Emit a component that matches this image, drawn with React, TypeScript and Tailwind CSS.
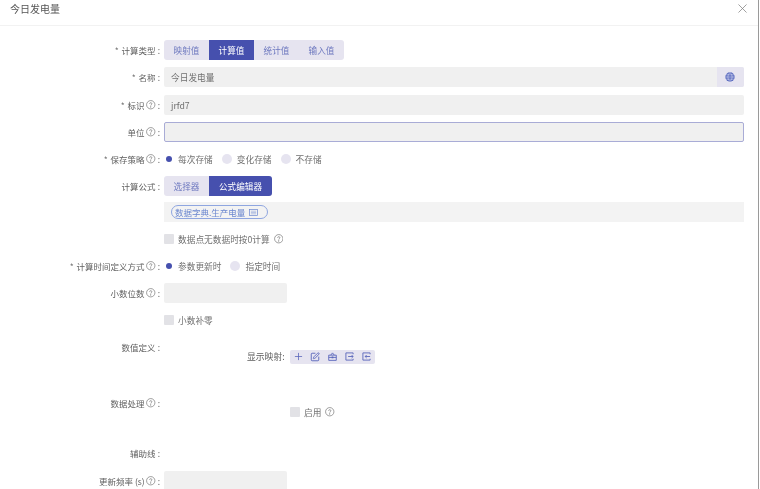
import React from "react";
import { Plus, SquarePen, X } from "lucide-react";

function Help({ className = "" }: { className?: string }) {
  return (
    <svg viewBox="0 0 10 10" className={"h-[9.5px] w-[9.5px] shrink-0 " + className} fill="none" stroke="#707070" strokeWidth="0.7">
      <circle cx="5" cy="5" r="4.4" />
      <path d="M3.800 4c0-.7.5-1.200 1.200-1.200S6.200 3.300 6.200 4C6.200 4.900 5 4.900 5 5.900" />
      <circle cx="5" cy="7.300" r=".3" fill="#707070" />
    </svg>
  );
}

function Row({ label, star, help, className = "", children }: { label: React.ReactNode; star?: boolean; help?: boolean; className?: string; children?: React.ReactNode }) {
  return (
    <div className={"flex h-5 items-center " + className}>
      <div className="flex w-[164px] shrink-0 items-center justify-end whitespace-nowrap pr-[4px] text-[8.5px] text-[#606060]">
        {star && <span className="mr-[3px] pt-[1px] text-[#777]">*</span>}
        <span className="pt-[1px]">{label}</span>
        {help && <Help className="ml-[1.5px]" />}
        <span className="ml-[2px] pt-[1px]">:</span>
      </div>
      {children}
    </div>
  );
}

function Seg({ items, active, widths }: { items: string[]; active: number; widths: string[] }) {
  return (
    <div className="flex h-5 overflow-hidden rounded-[3px] bg-[#e6e4f0]">
      {items.map((t, i) => (
        <div key={t} className={"flex items-center justify-center pt-[1px] text-[8.6px] " + widths[i] + " " + (i === active ? "bg-[#4650ae] text-white" : "text-[#6d78bf]")}>
          {t}
        </div>
      ))}
    </div>
  );
}

function Radio({ label, on, className = "" }: { label: string; on?: boolean; className?: string }) {
  return (
    <div className={"flex items-center " + className}>
      {on ? (
        <span className="flex h-[10px] w-[9px] items-center justify-center rounded-full bg-white">
          <span className="h-[6px] w-[6px] rounded-full bg-[#4650ae]" />
        </span>
      ) : (
        <span className="h-[10px] w-[10px] rounded-full bg-[#e6e4f0]" />
      )}
      <span className="ml-[5px] pt-[1px] text-[8.7px] text-[#707070]">{label}</span>
    </div>
  );
}

function Check({ label, help }: { label: string; help?: boolean }) {
  return (
    <div className="flex items-center">
      <span className="h-[10px] w-[10px] rounded-[1px] bg-[#e2e2e6]" />
      <span className="ml-[4px] pt-[1px] text-[8.7px] text-[#707070]">{label}</span>
      {help && <Help className="ml-[4px]" />}
    </div>
  );
}

function Box({ dir }: { dir: "out" | "in" }) {
  return (
    <svg viewBox="0 0 10 10" className="h-[9px] w-[9px]" fill="none" stroke="#5a66bb" strokeWidth="1">
      <path d="M9 2.500V1H1v8h8V7.500" />
      {dir === "out" ? <path d="M3.500 5H9M7.300 3.300 9 5 7.300 6.700" /> : <path d="M9 5H3.500M5.200 3.300 3.500 5 5.200 6.700" />}
    </svg>
  );
}

function Tool({ children }: { children: React.ReactNode }) {
  return <div className="flex h-[14px] w-[17px] items-center justify-center">{children}</div>;
}

export default function App() {
  return (
    <div className="h-[489px] w-[760px] overflow-hidden bg-white blur-[0.3px]" style={{ fontFamily: '"Noto Sans CJK SC", "Noto Sans", sans-serif' }}>
      <div className="h-[489px] w-[759px] border-r border-[#9a9a9a]">
        <div className="flex h-[26px] items-center justify-between border-b border-[#f2f2f2] pb-[9px] pl-[10px] pr-[8px]">
          <span className="text-[10px] text-[#555]">今日发电量</span>
          <X className="h-[15px] w-[15px] text-[#808080]" strokeWidth={1.2} />
        </div>

        <div className="w-[744px]">
          <Row label="计算类型" star className="mt-[14px]">
            <Seg items={["映射值", "计算值", "统计值", "输入值"]} active={1} widths={["w-[45px]", "w-[45px]", "w-[45px]", "w-[45px]"]} />
          </Row>
          <Row label="名称" star className="mt-[7px]">
            <div className="flex h-5 flex-1 items-center justify-between overflow-hidden rounded-[2px] bg-[#f0f0f0]">
              <span className="pl-[7px] pt-[1px] text-[8.7px] text-[#707070]">今日发电量</span>
              <div className="flex h-5 w-[27px] items-center justify-center bg-[#e6e4f0]">
                <svg viewBox="0 0 10 10" className="mr-[1px] h-[10px] w-[10px]" fill="#5a6abf" stroke="#d5d9f2" strokeWidth="0.6">
                  <circle cx="5" cy="5" r="4.700" stroke="none" />
                  <path d="M.5 5h9M1.200 2.800h7.600M1.200 7.200h7.600M5 .5c-2.800 3-2.800 6 0 9M5 .5c2.800 3 2.800 6 0 9" fill="none" />
                </svg>
              </div>
            </div>
          </Row>
          <Row label="标识" star help className="mt-[8px]">
            <div className="flex h-5 flex-1 items-center rounded-[2px] bg-[#f0f0f0] pl-[7px] pt-[1px] text-[8.7px] text-[#707070]">jrfd7</div>
          </Row>
          <Row label="单位" help className="mt-[7px]">
            <div className="h-5 flex-1 rounded-[2px] border border-[#a9acd6] bg-[#f0f0f0]" />
          </Row>
          <Row label="保存策略" star help className="mt-[7px]">
            <Radio label="每次存储" on />
            <Radio label="变化存储" className="ml-[9px]" />
            <Radio label="不存储" className="ml-[9px]" />
          </Row>
          <Row label="计算公式" className="mt-[7px]">
            <Seg items={["选择器", "公式编辑器"]} active={1} widths={["w-[45px]", "w-[63px]"]} />
          </Row>
          <div className="mt-[6px] flex h-5 items-center pl-[164px]">
            <div className="flex h-5 flex-1 items-center bg-[#f3f3f3] pl-[7px]">
              <div className="flex h-[14px] w-[97px] items-center rounded-full border border-[#8fa6e0] pl-[3px] text-[8.5px] text-[#6b87cf]">
                <span className="whitespace-nowrap">数据字典.生产电量</span>
                <svg viewBox="0 0 10 8" className="ml-[4px] h-[7px] w-[9px]" fill="none" stroke="#6b87cf" strokeWidth="0.8">
                  <rect x=".5" y=".5" width="9" height="7" />
                  <path d="M2 4h6M2 2.500h6M2 5.500h6" strokeWidth=".5" />
                </svg>
              </div>
            </div>
          </div>
          <div className="mt-[7px] flex h-5 items-center pl-[164px]">
            <Check label="数据点无数据时按0计算" help />
          </div>
          <Row label="计算时间定义方式" star help className="mt-[7px]">
            <Radio label="参数更新时" on />
            <Radio label="指定时间" className="ml-[9px]" />
          </Row>
          <Row label="小数位数" help className="mt-[7px]">
            <div className="h-5 w-[123px] rounded-[2px] bg-[#f0f0f0]" />
          </Row>
          <div className="mt-[7.5px] flex h-5 items-center pl-[164px]">
            <Check label="小数补零" />
          </div>

          <Row label="数值定义" className="mt-[6px]" />
          <div className="mt-[-10px] flex h-5 items-center pl-[247px]">
            <span className="whitespace-nowrap pt-[1px] text-[8.8px] text-[#606060]">显示映射:</span>
            <div className="ml-[5px] flex h-[14px] w-[85px] items-center rounded-[2px] bg-[#e6e4f0]">
              <Tool><Plus className="h-[11px] w-[11px] text-[#5a66bb]" strokeWidth={1.7} /></Tool>
              <Tool><SquarePen className="h-[10px] w-[10px] text-[#5a66bb]" strokeWidth={2.2} /></Tool>
              <Tool>
                <svg viewBox="0 0 10 10" className="h-[9px] w-[9px]" fill="none" stroke="#5a66bb" strokeWidth="1">
                  <path d="M.8 3.500H9.200V9.300H.8zM3 3.500 5 1l2 2.500M.8 6h8.400" />
                  <path d="M4 5h2v2H4z" fill="#5a66bb" stroke="none" />
                </svg>
              </Tool>
              <Tool><Box dir="out" /></Tool>
              <Tool><Box dir="in" /></Tool>
            </div>
          </div>

          <Row label="数据处理" help className="mt-[26.5px]" />
          <div className="mt-[-11px] flex h-5 items-center pl-[290px]">
            <Check label="启用" help />
          </div>

          <Row label="辅助线" className="mt-[21px]" />
          <Row label="更新频率 (s)" help className="mt-[8px]">
            <div className="h-5 w-[123px] rounded-[2px] bg-[#f0f0f0]" />
          </Row>
        </div>
      </div>
    </div>
  );
}
